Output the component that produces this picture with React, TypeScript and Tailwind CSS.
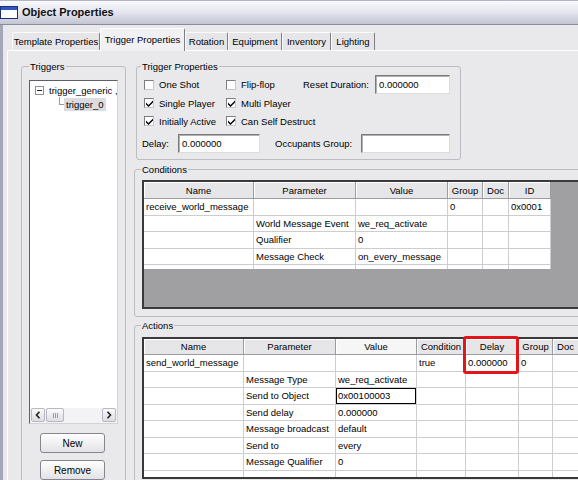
import React from "react";

type Col = { w: string; label: string; hl?: boolean };

function Check({ on }: { on?: boolean }) {
  return (
    <span className="w-[10px] h-[10px] shrink-0 bg-white border border-t-[#7c7c84] border-l-[#7c7c84] border-r-[#c8c8cc] border-b-[#c8c8cc] flex items-center justify-center">
      {on && (
        <svg width="7" height="7" viewBox="0 0 7 7">
          <path d="M0 2.5L2.5 5L7 0.5V2.5L2.5 7L0 4.5Z" fill="#000" />
        </svg>
      )}
    </span>
  );
}

function Input({ w, text }: { w: string; text?: string }) {
  return (
    <div
      className={`${w} h-[19px] shrink-0 bg-white border border-t-[#7a7a7a] border-l-[#7a7a7a] border-r-[#dcdcdc] border-b-[#dcdcdc] shadow-[inset_1px_1px_0_#b0b0b0] flex items-center pl-[3px]`}
    >
      {text}
    </div>
  );
}

function CheckItem({ w, on, label }: { w: string; on?: boolean; label: string }) {
  return (
    <div className={`${w} shrink-0 flex items-center gap-[5px]`}>
      <Check on={on} />
      <span className="whitespace-nowrap">{label}</span>
    </div>
  );
}

function Grid({
  cols,
  rows,
  headerH,
  lastH,
  h,
  focus,
}: {
  cols: Col[];
  rows: string[][];
  headerH: string;
  lastH: string;
  h: string;
  focus?: [number, number];
}) {
  return (
    <div className={`${h} border-2 border-[#3a3a3a] bg-[#a0a0a2] overflow-hidden`}>
      <div className="flex w-max">
        {cols.map((c, j) => (
          <div
            key={j}
            className={`${c.w} ${headerH} shrink-0 flex items-center justify-center border-r border-b border-[#9c9ca0] shadow-[inset_1px_1px_0_#ffffff] whitespace-nowrap ${
              c.hl ? "bg-[#f6f6f7]" : "bg-[#e6e6e8]"
            }`}
          >
            {c.label}
          </div>
        ))}
      </div>
      {rows.map((r, i) => (
        <div key={i} className="flex w-max">
          {cols.map((c, j) => (
            <div
              key={j}
              className={`${c.w} h-[16.5px] shrink-0 bg-white border-r border-b border-[#cdcdcf] flex items-center pl-[2px] whitespace-nowrap overflow-hidden ${
                focus && focus[0] === i && focus[1] === j ? "shadow-[inset_0_0_0_1px_#000]" : ""
              }`}
            >
              {r[j]}
            </div>
          ))}
        </div>
      ))}
      <div className="flex w-max">
        {cols.map((c, j) => (
          <div key={j} className={`${c.w} ${lastH} shrink-0 bg-white border-r border-[#cdcdcf]`} />
        ))}
      </div>
    </div>
  );
}

const condCols: Col[] = [
  { w: "w-[110px]", label: "Name" },
  { w: "w-[102px]", label: "Parameter" },
  { w: "w-[92px]", label: "Value" },
  { w: "w-[35px]", label: "Group" },
  { w: "w-[26px]", label: "Doc" },
  { w: "w-[42px]", label: "ID" },
];

const condRows = [
  ["receive_world_message", "", "", "0", "", "0x0001"],
  ["", "World Message Event", "we_req_activate", "", "", ""],
  ["", "Qualifier", "0", "", "", ""],
  ["", "Message Check", "on_every_message", "", "", ""],
];

const actCols: Col[] = [
  { w: "w-[100px]", label: "Name" },
  { w: "w-[92px]", label: "Parameter" },
  { w: "w-[81px]", label: "Value", hl: true },
  { w: "w-[49px]", label: "Condition" },
  { w: "w-[53px]", label: "Delay" },
  { w: "w-[34px]", label: "Group" },
  { w: "w-[26px]", label: "Doc" },
  { w: "w-[40px]", label: "" },
];

const actRows = [
  ["send_world_message", "", "", "true", "0.000000", "0", "", ""],
  ["", "Message Type", "we_req_activate", "", "", "", "", ""],
  ["", "Send to Object", "0x00100003", "", "", "", "", ""],
  ["", "Send delay", "0.000000", "", "", "", "", ""],
  ["", "Message broadcast", "default", "", "", "", "", ""],
  ["", "Send to", "every", "", "", "", "", ""],
  ["", "Message Qualifier", "0", "", "", "", "", ""],
];

const tabs: { label: string; w: string; sel?: boolean }[] = [
  { label: "Template Properties", w: "w-[88px]" },
  { label: "Trigger Properties", w: "w-[85px]", sel: true },
  { label: "Rotation", w: "w-[43px]" },
  { label: "Equipment", w: "w-[54px]" },
  { label: "Inventory", w: "w-[49px]" },
  { label: "Lighting", w: "w-[44px]" },
];

function ScrollBtn({ dir }: { dir: "l" | "r" }) {
  return (
    <div className="w-[14px] shrink-0 bg-gradient-to-b from-[#fbfbfc] to-[#dcdce2] border border-[#b8b8c4] rounded-[2px] flex items-center justify-center">
      <svg width="6" height="8" viewBox="0 0 6 8">
        {dir === "l" ? (
          <path d="M4.5 0.8L1.5 4L4.5 7.2" stroke="#222" strokeWidth="1.6" fill="none" />
        ) : (
          <path d="M1.5 0.8L4.5 4L1.5 7.2" stroke="#222" strokeWidth="1.6" fill="none" />
        )}
      </svg>
    </div>
  );
}

export default function App() {
  return (
    <div className="w-[578px] h-[480px] overflow-hidden bg-[#e9e9eb] text-[9.5px] leading-[11px] text-black font-['Liberation_Sans',Arial,sans-serif] flex flex-col">
      {/* Title bar */}
      <div className="h-[25px] shrink-0 flex items-center gap-[4px] bg-gradient-to-b from-[#f8f9fd] via-[#e3e4ee] to-[#c3c5d3] border-t border-t-[#b4b6c6] border-b border-b-[#8a8c9c]">
        <svg width="18" height="13" viewBox="0 0 18 13" className="shrink-0">
          <rect x="0.5" y="0.5" width="17" height="12" fill="#ffffff" stroke="#1c2f7a" />
          <rect x="1" y="1" width="16" height="3" fill="#2f55c4" />
        </svg>
        <span className="text-[11px] leading-[13px] font-bold text-[#101010]">Object Properties</span>
      </div>

      <div className="flex-1 min-h-0 flex flex-col border-l-[3px] border-l-[#a3a7b8]">
        {/* Tabs */}
        <div className="h-[25px] shrink-0 flex items-end pl-[9px]">
          {tabs.map((t, i) =>
            t.sel ? (
              <div
                key={i}
                className={`${t.w} h-[23px] shrink-0 relative z-10 -mb-px bg-[#f1f1f3] border-l border-t border-white border-r border-r-[#7e7e86] rounded-t-[2px] flex items-start justify-center pt-[5px] whitespace-nowrap`}
              >
                {t.label}
              </div>
            ) : (
              <div
                key={i}
                className={`${t.w} h-[18px] shrink-0 bg-[#e6e6e9] border-l border-t border-[#fbfbfb] border-r border-r-[#7e7e86] rounded-t-[2px] flex items-center justify-center whitespace-nowrap`}
              >
                {t.label}
              </div>
            )
          )}
        </div>

        {/* Panel */}
        <div className="flex-1 min-h-0 ml-[4px] flex border-t border-l border-white pt-[10px]">
          {/* Left column */}
          <div className="pl-[13px] shrink-0">
            <fieldset className="w-[105px] h-[440px] border border-[#bcbcc4] rounded-[3px]">
              <legend className="ml-[7px] px-[1px] leading-[11px]">Triggers</legend>
              <div className="pl-[7px] pt-[8px] flex flex-col">
                <div className="w-[89px] h-[344px] bg-white border border-t-[#5e5e66] border-l-[#5e5e66] border-r-[#d4d4d8] border-b-[#d4d4d8] flex flex-col">
                  <div className="flex-1 min-h-0 overflow-hidden flex flex-col pt-[2px]">
                    <div className="h-[14px] flex items-center">
                      <span className="ml-[5px] w-[9px] h-[9px] shrink-0 border border-[#8f8f8f] bg-white flex items-center justify-center">
                        <span className="w-[5px] h-px bg-[#222]" />
                      </span>
                      <span className="ml-[5px] whitespace-nowrap">trigger_generic ,</span>
                    </div>
                    <div className="h-[14px] flex items-start">
                      <span className="ml-[29px] w-[5px] h-[8px] shrink-0 border-l border-b border-[#9a9a9a]" />
                      <span className="mt-[1px] px-[2px] h-[13px] bg-[#dcdce0] flex items-center whitespace-nowrap">trigger_0</span>
                    </div>
                  </div>
                  <div className="h-[15px] shrink-0 flex pl-px pr-px pb-px bg-[#f3f3f5]">
                    <ScrollBtn dir="l" />
                    <div className="w-[18px] ml-px shrink-0 bg-gradient-to-b from-[#fbfbfc] to-[#dedee4] border border-[#b8b8c4] rounded-[2px] flex items-center justify-center gap-[1px]">
                      <span className="w-px h-[5px] bg-[#9a9aa6]" />
                      <span className="w-px h-[5px] bg-[#9a9aa6]" />
                      <span className="w-px h-[5px] bg-[#9a9aa6]" />
                    </div>
                    <div className="flex-1" />
                    <ScrollBtn dir="r" />
                  </div>
                </div>
                <div className="ml-[11px] mt-[9px] w-[65px] h-[20px] bg-gradient-to-b from-[#ffffff] to-[#e2e2e6] border border-[#85858f] rounded-[3px] flex items-center justify-center text-[10px]">
                  New
                </div>
                <div className="ml-[11px] mt-[7px] w-[65px] h-[20px] bg-gradient-to-b from-[#ffffff] to-[#e2e2e6] border border-[#85858f] rounded-[3px] flex items-center justify-center text-[10px]">
                  Remove
                </div>
              </div>
            </fieldset>
          </div>

          {/* Right column */}
          <div className="ml-[8px] w-[470px] shrink-0 flex flex-col">
            <fieldset className="ml-[2px] w-[325px] border border-[#bcbcc4] rounded-[3px]">
              <legend className="ml-[4px] px-[1px] leading-[11px]">Trigger Properties</legend>
              <div className="pl-[7px] pt-[3px] pb-[6px] flex flex-col">
                <div className="h-[19px] flex items-center">
                  <CheckItem w="w-[82px]" label="One Shot" />
                  <CheckItem w="w-[77px]" label="Flip-flop" />
                  <span className="w-[72px] shrink-0 whitespace-nowrap">Reset Duration:</span>
                  <Input w="w-[75px]" text="0.000000" />
                </div>
                <div className="h-[18px] flex items-center">
                  <CheckItem w="w-[82px]" on label="Single Player" />
                  <CheckItem w="w-[77px]" on label="Multi Player" />
                </div>
                <div className="h-[18px] flex items-center">
                  <CheckItem w="w-[82px]" on label="Initially Active" />
                  <CheckItem w="w-[120px]" on label="Can Self Destruct" />
                </div>
                <div className="mt-[3px] h-[20px] flex items-center -ml-[2px]">
                  <span className="w-[36px] shrink-0">Delay:</span>
                  <Input w="w-[82px]" text="0.000000" />
                  <span className="ml-[15px] w-[86px] shrink-0 whitespace-nowrap">Occupants Group:</span>
                  <Input w="w-[89px]" />
                </div>
              </div>
            </fieldset>

            <fieldset className="mt-[4px] w-[460px] border border-[#bcbcc4] rounded-[3px]">
              <legend className="ml-[6px] px-[1px] leading-[11px]">Conditions</legend>
              <div className="pl-[7px] pt-[5px] pb-[7px]">
                <Grid cols={condCols} rows={condRows} headerH="h-[17px]" lastH="h-[4px]" h="h-[129px]" />
              </div>
            </fieldset>

            <fieldset className="mt-[3px] w-[460px] border border-[#bcbcc4] rounded-[3px]">
              <legend className="ml-[6px] px-[1px] leading-[11px]">Actions</legend>
              <div className="pl-[7px] pt-[6px] pb-[7px]">
                <div className="relative">
                  <Grid
                    cols={actCols}
                    rows={actRows}
                    headerH="h-[16px]"
                    lastH="h-[7px]"
                    h="h-[142px]"
                    focus={[2, 2]}
                  />
                  <div className="absolute left-[321px] top-[-1px] w-[56px] h-[38px] border-[3px] border-[#e3141a] rounded-[3px]" />
                </div>
              </div>
            </fieldset>
          </div>
        </div>
      </div>
    </div>
  );
}
